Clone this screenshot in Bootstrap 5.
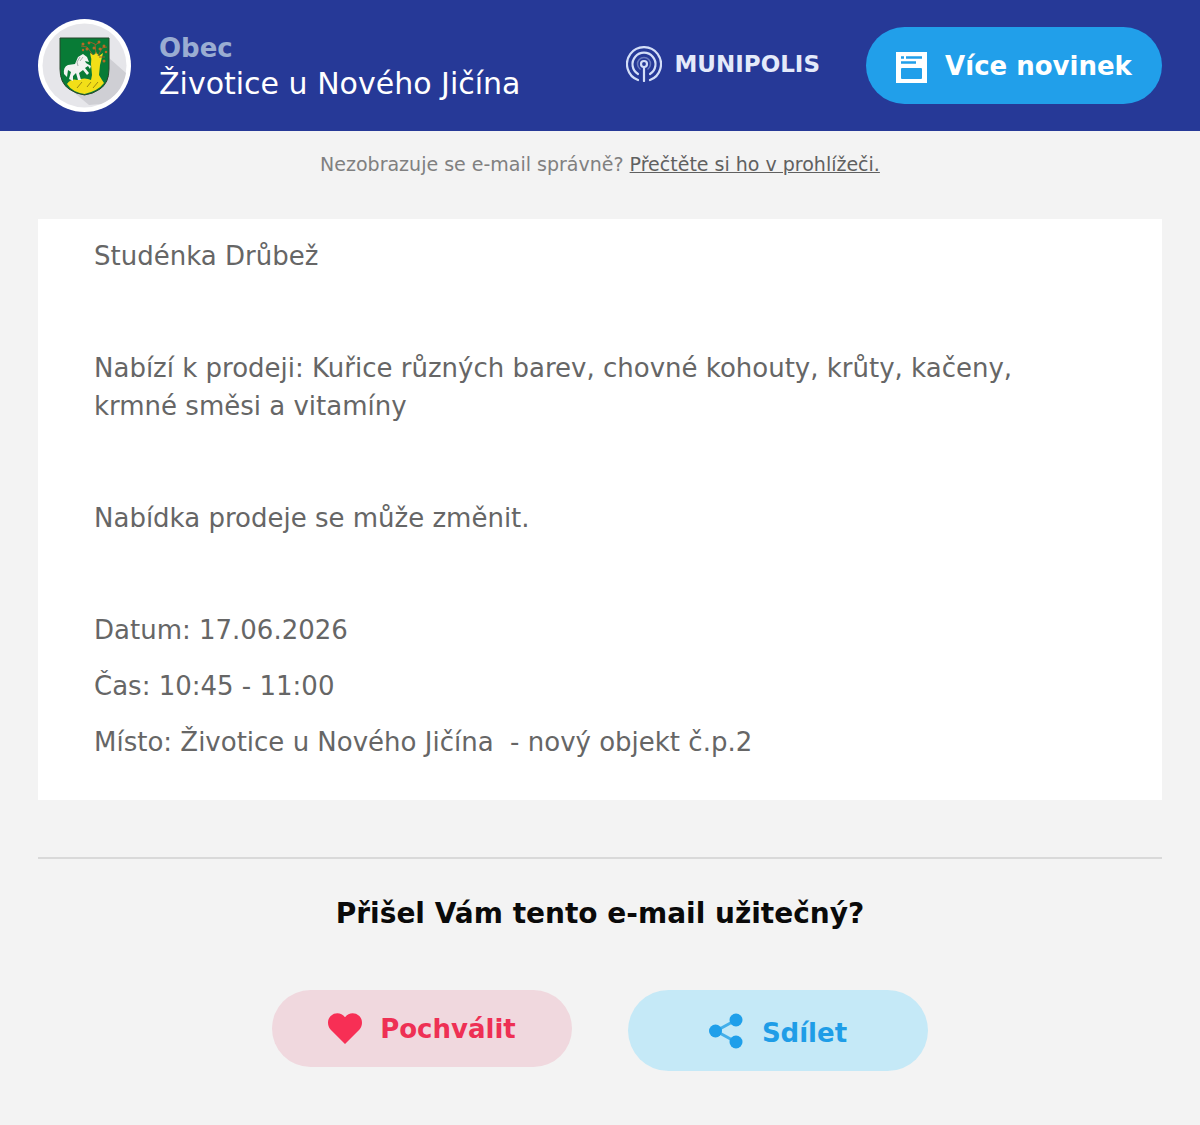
<!DOCTYPE html>
<html lang="cs">
<head>
<meta charset="utf-8">
<meta name="viewport" content="width=device-width, initial-scale=1">
<title>Munipolis – Životice u Nového Jičína</title>
<link href="https://cdn.jsdelivr.net/npm/bootstrap@5.3.0/dist/css/bootstrap.min.css" rel="stylesheet">
<style>
  body { background: #f3f3f3; font-family: "DejaVu Sans", Verdana, sans-serif; color: #666; }
  .mail-head { background: #263997; padding: 19px 38px; min-height: 131px; }
  .crest { width: 93px; height: 93px; margin-right: 28px; }
  .muni-label { font-size: 26px; line-height: 36px; color: #9aadd2; }
  .muni-name { font-size: 30px; line-height: 36px; color: #fff; }
  .brand { color: #e4eafa; font-size: 23px; font-weight: 700; line-height: 36px; gap: 12px; margin-right: 46px; padding-bottom: 4px; }
  .pill { height: 77px; border: 0; border-radius: 39px; font-size: 26px; font-weight: 700; line-height: 38px; gap: 18px; }
  .pill-news { width: 296px; background: #219fea; color: #fff; }
  .pill-like, .pill-share { width: 300px; }
  .pill-like { background: #f0d8de; color: #ee3054; }
  .pill-share { height: 81px; border-radius: 41px; background: #c5e9f7; color: #1f9de7; }
  .pill-news:hover { background: #1690d9; color: #fff; }
  .pill-like:hover { background: #edccd4; color: #ee3054; }
  .pill-share:hover { background: #b2e0f2; color: #1f9de7; }
  .pill-share span { padding-top: 4px; }
  .browser-note { font-size: 19px; line-height: 28px; color: #808080; padding-top: 19px; margin-bottom: 41px; }
  .browser-note a { color: #606060; }
  .mail-main { padding: 0 38px; }
  .message { background: #fff; padding: 18px 76px 39px 56px; font-size: 26px; line-height: 38px; }
  .message p { margin-bottom: 18px; min-height: 38px; }
  .message p:last-child { margin-bottom: 0; }
  .divider { margin: 57px 0 36px; border-top: 2px solid #d9d9d9; opacity: 1; }
  .question { font-size: 28px; line-height: 38px; font-weight: 700; color: #0a0a0a; margin-bottom: 57px; }
  .actions { gap: 56px; padding-bottom: 54px; }
</style>
</head>
<body>
<header class="mail-head d-flex align-items-center">
  <svg class="crest flex-shrink-0" viewBox="0 0 93 93" role="img" aria-label="Znak obce">
    <circle cx="46.500" cy="46.500" r="46.500" fill="#fff"/>
    <circle cx="46.500" cy="46.500" r="42" fill="#e6e6ea"/>
    <path d="M71 39 88 54Q84 76 63 85L51 86 33 71Z" fill="#cfcfd4"/>
    <path d="M22 19H71V50Q71 64 62 70Q55 75 46.500 76Q38 75 31 70Q22 64 22 50Z" fill="#087b36" stroke="#29462c"/>
    <path d="M29 65Q33 59 39 61Q47 58 53 61L54 56 53 45Q54 40 52 34L56 36 58 33 61 37 65 34 63 42 62 46 61 56 64 61 66 64Q60 72 46.500 75Q34 73 29 65Z" fill="#f2df18"/>
    <path d="M39 69 44 63M49 68 53 63M55 69 60 63" stroke="#9c8a12" stroke-width="1" fill="none"/>
    <path d="M55 36 49 28 43 27M58 35 57 25 52 23M60 37 64 29 69 28M61 38 67 38M57 26 62 23" stroke="#93612a" stroke-width="1" fill="none"/>
    <g fill="#b66a25"><circle cx="45" cy="25" r="1.500"/><circle cx="51" cy="24" r="1.400"/><circle cx="61" cy="23" r="1.500"/><circle cx="66" cy="27" r="1.500"/><circle cx="68" cy="33" r="1.300"/><circle cx="49" cy="30" r="1.500"/><circle cx="56" cy="29" r="1.500"/><circle cx="62" cy="30" r="1.500"/><circle cx="66" cy="42" r="1.500"/><circle cx="45" cy="31" r="1.200"/></g>
    <path d="M49 38 45 35 40 38 37 45 30 46Q25 48 26 55L29 58 30 51 33 53 31 60 35 62 35 57 38 54 40 61 43 61 41 54 45 51 49 56 51 54 47 49 50 47 52 50 53 47 48 44 47 42 51 43Z" fill="#f2f3f1"/>
    <path d="M42 38 39 43 40 47M45 38l-3 4" stroke="#a6b1ac" fill="none"/>
  </svg>
  <div class="flex-grow-1">
    <div class="muni-label fw-bold">Obec</div>
    <div class="muni-name">Životice u Nového Jičína</div>
  </div>
  <div class="brand d-flex align-items-center flex-shrink-0">
    <svg width="36" height="36" viewBox="0 0 36 36" fill="none" stroke="#d3def8" stroke-width="2.200" stroke-linecap="round" aria-hidden="true">
      <path d="M12 34A17 17 0 1 1 24 34"/>
      <path d="M12 28A11.500 11.500 0 1 1 24 28"/>
      <path d="M14 23A6.500 6.500 0 1 1 22 23" stroke-width="1.500" opacity=".4"/>
      <circle cx="18" cy="18" r="3"/>
      <path d="M18 21V35"/>
    </svg>
    <span>MUNIPOLIS</span>
  </div>
  <button type="button" class="btn pill pill-news d-flex align-items-center justify-content-center flex-shrink-0">
    <svg width="31" height="31" viewBox="0 0 31 31" class="mt-1" aria-hidden="true">
      <path d="M0 0H31V31H0Z" fill="#fff"/>
      <path d="M5 5.500H8M10 5.500H26M5 10.500H20" stroke="#219fea" stroke-width="2.400"/>
      <rect x="5" y="16" width="21" height="11" rx="1" fill="#219fea"/>
    </svg>
    <span>Více novinek</span>
  </button>
</header>
<main class="mail-main">
  <p class="browser-note text-center">Nezobrazuje se e-mail správně? <a href="#">Přečtěte si ho v prohlížeči.</a></p>
  <article class="message">
    <p>Studénka Drůbež</p>
    <p></p>
    <p>Nabízí k prodeji: Kuřice různých barev, chovné kohouty, krůty, kačeny, krmné směsi a vitamíny</p>
    <p></p>
    <p>Nabídka prodeje se může změnit.</p>
    <p></p>
    <p>Datum: 17.06.2026</p>
    <p>Čas: 10:45 - 11:00</p>
    <p>Místo: Životice u Nového Jičína&nbsp; - nový objekt č.p.2</p>
  </article>
  <hr class="divider">
  <h2 class="question text-center">Přišel Vám tento e-mail užitečný?</h2>
  <div class="actions d-flex flex-wrap justify-content-center align-items-start">
    <button type="button" class="btn pill pill-like d-flex align-items-center justify-content-center">
      <svg width="34" height="31" viewBox="0 0 34 31" aria-hidden="true"><path d="M17 31 2.500 16.500C-1 12.500-.8 6 3 2.700 7-1 13.500-.6 17 4.200 20.500-.6 27-1 31 2.700 34.800 6 35 12.500 31.500 16.500Z" fill="#f72f55"/></svg>
      <span>Pochválit</span>
    </button>
    <button type="button" class="btn pill pill-share d-flex align-items-center justify-content-center">
      <svg width="35" height="36" viewBox="0 0 35 36" fill="#1f9fea" aria-hidden="true"><path d="M27 7 7 18 27 29" fill="none" stroke="#43afea" stroke-width="3"/><circle cx="27" cy="7" r="6.500"/><circle cx="6.500" cy="18" r="6.500"/><circle cx="27" cy="29" r="6.500"/></svg>
      <span>Sdílet</span>
    </button>
  </div>
</main>
<script src="https://cdn.jsdelivr.net/npm/bootstrap@5.3.0/dist/js/bootstrap.bundle.min.js"></script>
</body>
</html>
